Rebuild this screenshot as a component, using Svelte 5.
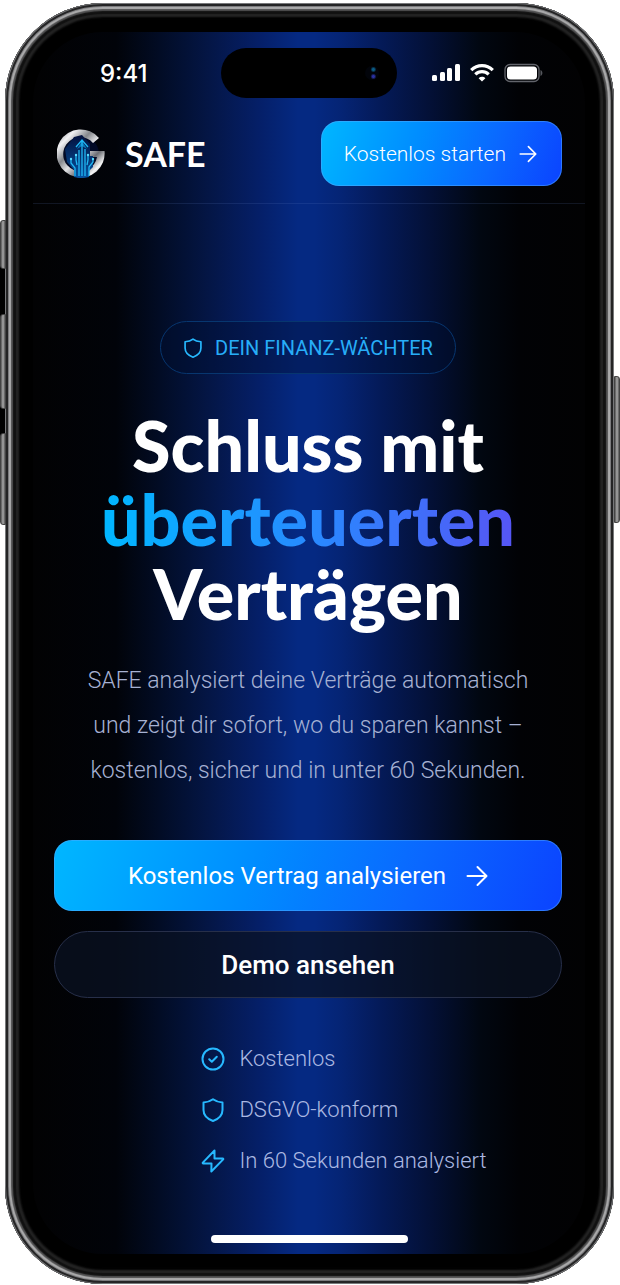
<script>
    const features = [
        { icon: 'check', text: 'Kostenlos' },
        { icon: 'shield', text: 'DSGVO-konform' },
        { icon: 'bolt', text: 'In 60 Sekunden analysiert' }
    ];
</script>

{#snippet arrow()}
    <svg class="arrow" viewBox="0 0 22 22" aria-hidden="true">
        <path d="M1.5 11H20M11.5 2L20.5 11L11.5 20" />
    </svg>
{/snippet}

{#snippet icon(name)}
    <svg class="icon" viewBox="0 0 24 24" aria-hidden="true">
        {#if name === 'check'}
            <circle cx="12" cy="12" r="10.5" />
            <path d="M8.2 12.3L10.8 14.8L15.8 9.8" />
        {:else if name === 'shield'}
            <path d="M12 1.3C9.5 3.2 6.5 4.2 2.5 4.5V12C2.5 17.5 6.500 21 12 23C17.500 21 21.500 17.500 21.500 12V4.500C17.500 4.200 14.500 3.200 12 1.300Z" />
        {:else}
            <path d="M13.500 1.500L1.800 13.600C1.500 14 1.700 14.500 2.200 14.500H10.500L10.300 22.500L22.200 10.400C22.500 10 22.300 9.500 21.800 9.500H13.500Z" />
        {/if}
    </svg>
{/snippet}

<div class="page">
    <div class="phone">
        <span class="rail"></span>
        <span class="key action"></span>
        <span class="key up"></span>
        <span class="key down"></span>
        <span class="key power"></span>

        <div class="screen">
            <div class="status">
                <span class="time">9:41</span>
                <div class="island"><span class="lens"></span></div>
                <div class="signals">
                    <svg width="28" height="20" viewBox="0 0 28 20" fill="#fff">
                        <rect x="0" y="12" width="5" height="6" rx="1.500" />
                        <rect x="8" y="9" width="5" height="9" rx="1.500" />
                        <rect x="15" y="5" width="5" height="13" rx="1.500" />
                        <rect x="23" y="1" width="5" height="17" rx="1.500" />
                    </svg>
                    <svg width="24" height="20" viewBox="0 0 24 20" fill="none" stroke="#fff" stroke-width="3.200">
                        <path d="M1.200 7.200C7.500 1 16.500 1 22.800 7.200" />
                        <path d="M5.300 11.400C9.200 7.600 14.800 7.600 18.700 11.400" />
                        <path d="M12 18.500L8.600 15.200C10.600 13.300 13.400 13.300 15.400 15.200Z" fill="#fff" stroke="none" />
                    </svg>
                    <svg width="39" height="20" viewBox="0 0 39 20">
                        <rect x="1" y="1.500" width="34" height="17" rx="5" fill="none" stroke="#62646b" stroke-width="1.300" />
                        <rect x="3" y="3.500" width="30" height="13" rx="3.500" fill="#fff" />
                        <path d="M36.500 7C39 8 39 12 36.500 13Z" fill="#55575d" />
                    </svg>
                </div>
            </div>

            <header>
                <a class="brand" href="#top">
                    <svg class="logo" viewBox="0 0 48 50" aria-hidden="true">
                        <defs>
                            <linearGradient id="metal" x1="0" y1="0" x2="1" y2="1">
                                <stop offset="0" stop-color="#75777c" />
                                <stop offset=".2" stop-color="#f2f2f4" />
                                <stop offset=".38" stop-color="#85878c" />
                                <stop offset=".52" stop-color="#e2e2e5" />
                                <stop offset=".68" stop-color="#6b6d73" />
                                <stop offset=".82" stop-color="#f5f5f6" />
                                <stop offset="1" stop-color="#8d8f94" />
                            </linearGradient>
                            <linearGradient id="core" x1="0" y1="0" x2="0" y2="1">
                                <stop offset="0" stop-color="#03103d" />
                                <stop offset="1" stop-color="#0554a2" />
                            </linearGradient>
                        </defs>
                        <circle cx="24" cy="25" r="18" fill="#020a26" />
                        <path d="M42 9A24 24 0 1 0 47.500 22H32V28H40A17 17 0 1 1 36 14Z" fill="url(#metal)" />
                        <path d="M17 8L25 6L33 15V27H36V38L32 42V48Q24 50 17 48V41L10 33L8 20Z" fill="url(#core)" />
                        <path d="M20 20L25 12L30 20L25 17Z" fill="#0878bb" />
                        <path d="M25 12V47M19 18L25 11L31 18M22 21V47M28 20V47M18 47V39L14 34V30M32 47V38L36 33V30M20 36L19 31V26M30 36L31 31V27" fill="none" stroke="#20b8f4" stroke-width="1.300" />
                        <g fill="#58dcff">
                            <circle cx="14" cy="30" r="1.200" />
                            <circle cx="36" cy="30" r="1.200" />
                            <circle cx="19" cy="26" r="1.200" />
                            <circle cx="31" cy="26" r="1.200" />
                        </g>
                    </svg>
                    <span>SAFE</span>
                </a>
                <button class="primary small">Kostenlos starten {@render arrow()}</button>
            </header>

            <main>
                <div class="badge">{@render icon('shield')}<span>DEIN FINANZ-WÄCHTER</span></div>
                <h1>
                    <span>Schluss mit</span>
                    <span class="accent">überteuerten</span>
                    <span>Verträgen</span>
                </h1>
                <p>SAFE analysiert deine Verträge automatisch<br />und zeigt dir sofort, wo du sparen kannst –<br />kostenlos, sicher und in unter 60 Sekunden.</p>
                <div class="actions">
                    <button class="primary large">Kostenlos Vertrag analysieren {@render arrow()}</button>
                    <button class="secondary">Demo ansehen</button>
                </div>
                <ul>
                    {#each features as feature}
                        <li>{@render icon(feature.icon)}<span>{feature.text}</span></li>
                    {/each}
                </ul>
            </main>
            <div class="home"><span></span></div>
        </div>
    </div>
</div>

<style>
    :global(body) {
        margin: 0;
        background: #fff;
    }

    .page {
        padding: 3px 6px 2px 5px;
        font-family: Roboto, sans-serif;
        color: #fff;
    }

    .phone {
        position: relative;
        padding: 29px 29px 30px 28px;
        border-radius: 98px;
        background: #000;
        box-shadow:
            inset 0 0 0 1px #77787a,
            inset 0 0 0 3px #242425,
            inset 0 0 1px 4px #777779,
            inset 0 0 1px 6px #b0b0b1,
            inset 0 0 1px 8px #505051,
            inset 0 0 1px 11px #111,
            inset 0 0 2px 14px #242424,
            inset 0 0 3px 16px #030303;
    }

    .rail {
        position: absolute;
        left: -5px;
        top: 260px;
        width: 5px;
        height: 180px;
        background: #000;
    }

    .key {
        position: absolute;
        box-sizing: border-box;
        left: -5px;
        width: 6px;
        border: 1px solid #444;
        border-radius: 3px 0 0 3px;
        background: linear-gradient(90deg, #555, #aaa 50%, #555);
    }

    .action {
        top: 217px;
        height: 49px;
    }

    .up {
        top: 311px;
        height: 95px;
    }

    .down {
        top: 430px;
        height: 92px;
    }

    .power {
        left: auto;
        right: -6px;
        top: 373px;
        height: 147px;
        border-radius: 0 3px 3px 0;
    }

    .screen {
        border-radius: 70px;
        background: linear-gradient(90deg, #020203, #010309 15%, #020c25 23%, #041646 32%, #051f68 41%, #052982 48%, #052982 51%, #052474 56%, #041a58 63%, #031036 72%, #010711 81%, #010205 88%, #020203);
    }

    .status {
        display: grid;
        grid-template-columns: 1fr 176px 1fr;
        align-items: center;
        padding: 16px 0 0;
    }

    .time {
        padding-left: 67px;
        font: 500 24px Inter, sans-serif;
    }

    .island {
        display: flex;
        align-items: center;
        justify-content: flex-end;
        box-sizing: border-box;
        height: 50px;
        padding-right: 18px;
        border-radius: 25px;
        background: #000;
    }

    .lens {
        width: 14px;
        height: 14px;
        border-radius: 50%;
        background: radial-gradient(circle at 60% 75%, #2a31a0 1px, transparent 3px), radial-gradient(circle at 60% 25%, #0a5c86 1px, transparent 3px), #02040a;
    }

    .signals {
        display: flex;
        justify-content: flex-end;
        gap: 10px;
        padding-right: 42px;
    }

    header {
        display: flex;
        align-items: center;
        justify-content: space-between;
        padding: 23px 23px 17px 24px;
        border-bottom: 1px solid rgba(100, 130, 200, .16);
    }

    .brand {
        display: flex;
        align-items: center;
        gap: 20px;
        color: #fff;
        font: 700 34px Lato, sans-serif;
        text-decoration: none;
    }

    .logo {
        width: 48px;
        height: 50px;
    }

    button {
        display: flex;
        align-items: center;
        justify-content: center;
        box-sizing: border-box;
        color: #fff;
        font-family: Roboto, sans-serif;
        cursor: pointer;
    }

    .primary {
        border: 1px solid rgba(80, 170, 255, .5);
        border-radius: 18px;
        background: linear-gradient(110deg, #00b7ff, #008cff 40%, #0a68ff 70%, #0b43ff) border-box;
    }

    .small {
        gap: 13px;
        height: 65px;
        padding: 0 24px 0 22px;
        font-size: 21px;
        font-weight: 300;
    }

    .large {
        gap: 20px;
        height: 71px;
        font-size: 24px;
        font-weight: 400;
    }

    .secondary {
        height: 67px;
        border: 1px solid #272f49;
        border-radius: 34px;
        background: rgba(9, 17, 34, .75);
        font-size: 26px;
        font-weight: 500;
    }

    .arrow {
        flex: none;
        width: 22px;
        height: 22px;
        fill: none;
        stroke: currentColor;
        stroke-width: 2;
        stroke-linecap: round;
        stroke-linejoin: round;
    }

    .small .arrow {
        width: 18px;
        height: 18px;
    }

    main {
        display: flex;
        flex-direction: column;
        align-items: center;
        padding: 117px 23px 0 21px;
        text-align: center;
    }

    .badge {
        display: flex;
        align-items: center;
        gap: 12px;
        box-sizing: border-box;
        height: 53px;
        padding: 0 22px;
        border: 1px solid #07366f;
        border-radius: 27px;
        background: rgba(0, 15, 50, .4);
        color: #27adf8;
        font-size: 20px;
    }

    .icon {
        flex: none;
        width: 24px;
        height: 24px;
        fill: none;
        stroke: #27b9ff;
        stroke-width: 2;
        stroke-linecap: round;
        stroke-linejoin: round;
    }

    .badge .icon {
        width: 20px;
        height: 20px;
    }

    h1 {
        display: flex;
        flex-direction: column;
        align-items: center;
        margin: 34px 0 0;
        font: 900 70px/74px Lato, sans-serif;
    }

    .accent {
        background: linear-gradient(90deg, #00b7ff, #278bff 50%, #5655f5);
        background-clip: text;
        color: transparent;
    }

    p {
        margin: 28px 0 0;
        color: #a6b1d3;
        font-size: 23px;
        font-weight: 300;
        line-height: 45px;
    }

    .actions {
        display: flex;
        flex-direction: column;
        align-self: stretch;
        gap: 20px;
        margin-top: 47px;
    }

    ul {
        display: grid;
        gap: 27px;
        margin: 49px 0 0;
        padding: 0 0 0 72px;
        list-style: none;
        color: #abb8e2;
        font-size: 22px;
        font-weight: 300;
        line-height: 24px;
    }

    li {
        display: flex;
        align-items: center;
        gap: 14px;
    }

    .home {
        display: flex;
        justify-content: center;
        padding: 62px 0 11px;
    }

    .home span {
        width: 197px;
        height: 8px;
        border-radius: 4px;
        background: #fff;
    }
</style>
